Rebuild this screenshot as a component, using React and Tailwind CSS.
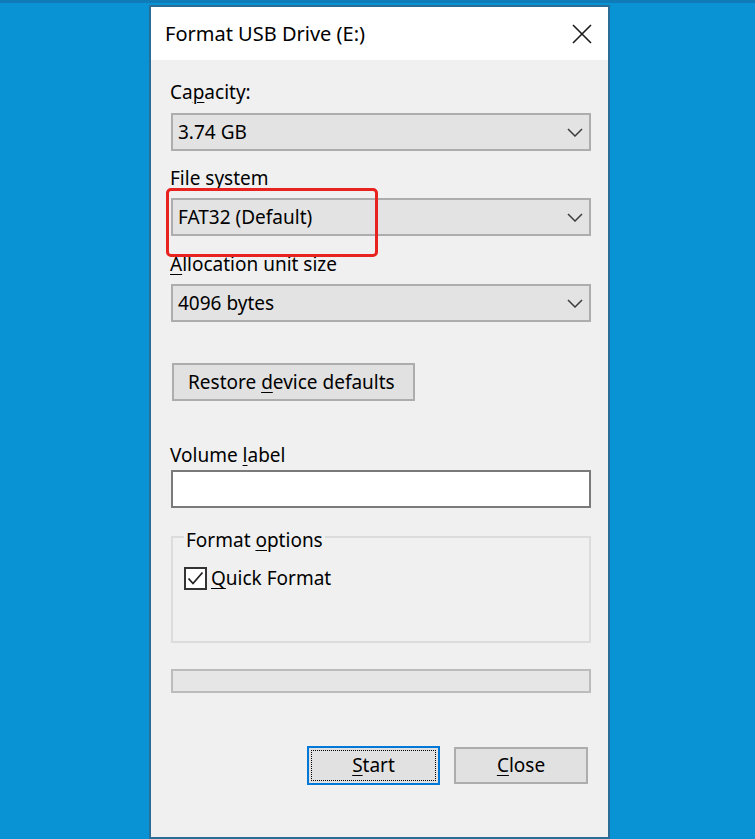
import React from "react";

const font = { fontFamily: '"Noto Sans", "Open Sans", sans-serif' };

// small access-key underline helper
const Key = ({ children }) => <span className="underline underline-offset-[3px] decoration-1">{children}</span>;

const Chevron = () => (
  <svg width="16" height="9" viewBox="0 0 16 9" fill="none">
    <polyline points="1,1 8,8 15,1" stroke="#3c3c3c" strokeWidth="1.5" />
  </svg>
);

const Combo = ({ value }) => (
  <div className="h-[38px] flex items-center justify-between border-2 border-[#adadad] bg-[#e3e3e3] pl-[5px] pr-[6px]">
    <span>{value}</span>
    <Chevron />
  </div>
);

const Label = ({ children, className = "" }) => (
  <div className={`h-[26px] leading-[26px] -ml-[1px] ${className}`}>{children}</div>
);

const App = () => {
  return (
    <div className="w-[755px] h-[839px] bg-[#0993d4] overflow-hidden border-t-[3px] border-[#0f7cb8]" style={font}>
      <div className="relative mt-[2px] ml-[149px] w-[461px] h-[834px] border-2 border-[#2a6d97] flex flex-col text-[19px] text-black">
        <div className="h-[53px] shrink-0 bg-white flex items-center justify-between pl-[14px] pr-[16px]">
          <span className="text-[20px]">Format USB Drive (E:)</span>
          <svg width="20" height="20" viewBox="0 0 20 20">
            <path d="M1 1 L19 19 M19 1 L1 19" stroke="#1a1a1a" strokeWidth="1.6" />
          </svg>
        </div>

        <div className="flex-1 bg-[#f0f0f0] pl-[20px] pr-[17px] pt-[19px] flex flex-col">
          <Label>
            Ca<Key>p</Key>acity:
          </Label>
          <div className="mt-[8px]">
            <Combo value="3.74 GB" />
          </div>

          <Label className="mt-[14px]">File system</Label>
          <div className="mt-[7px]">
            <Combo value="FAT32 (Default)" />
          </div>

          <Label className="mt-[15px]">
            <Key>A</Key>llocation unit size
          </Label>
          <div className="mt-[7px]">
            <Combo value="4096 bytes" />
          </div>

          <div className="mt-[41px] pl-[1px]">
            <div className="w-[243px] h-[38px] border-2 border-[#adadad] bg-[#e1e1e1] flex items-center pl-[14px]">
              <span>
                Restore <Key>d</Key>evice defaults
              </span>
            </div>
          </div>

          <Label className="mt-[41px]">
            Volume <Key>l</Key>abel
          </Label>
          <div className="mt-[2px] h-[38px] bg-white border-2 border-[#7a7a7a]" />

          <fieldset className="mt-[16px] h-[119px] border-2 border-[#dcdcdc] pl-[11px] pr-[12px]">
            <legend className="px-[2px] h-[26px] leading-[26px]">
              <span className="relative top-[3px]">
                Format <Key>o</Key>ptions
              </span>
            </legend>
            <div className="mt-[14px] flex items-center gap-[4px]">
              <div className="w-[23px] h-[23px] border-2 border-[#333] bg-white flex items-center justify-center">
                <svg width="17" height="15" viewBox="0 0 17 15" fill="none">
                  <polyline points="1.5,7.5 6,12.5 15.5,1.5" stroke="#222" strokeWidth="1.8" />
                </svg>
              </div>
              <span>
                <Key>Q</Key>uick Format
              </span>
            </div>
          </fieldset>

          <div className="mt-[26px] h-[24px] border-2 border-[#bcbcbc] bg-[#e6e6e6]" />

          <div className="mt-[53px] flex justify-end items-center gap-[14px] pr-[3px]">
            <div className="w-[133px] h-[39px] border-2 border-[#0078d7] bg-[#e1e1e1] p-[2px]">
              <div className="h-full border border-dotted border-black flex items-center justify-center">
                <span>
                  <Key>S</Key>tart
                </span>
              </div>
            </div>
            <div className="w-[134px] h-[37px] border-2 border-[#adadad] bg-[#e1e1e1] flex items-center justify-center">
              <span>
                <Key>C</Key>lose
              </span>
            </div>
          </div>
        </div>

        {/* red highlight drawn over the file system combo */}
        <div className="absolute left-[15px] top-[181px] w-[212px] h-[69px] border-[3px] border-[#e8221e] rounded-[5px]" />
      </div>
    </div>
  );
};

export default App;
